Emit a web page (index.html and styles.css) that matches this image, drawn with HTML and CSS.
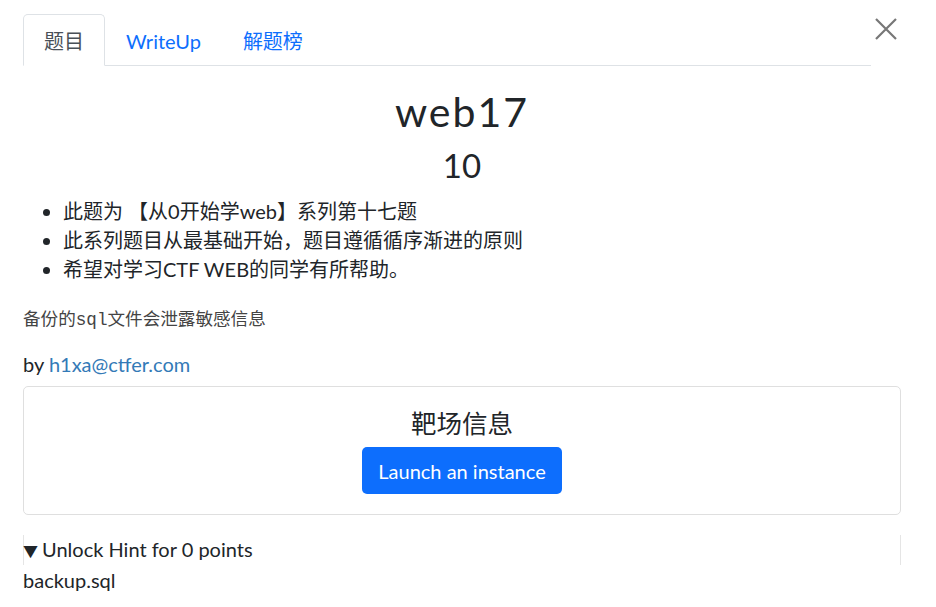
FILE: index.html
```html
<!DOCTYPE html>
<html>
<head>
<meta charset="utf-8">
<link rel="stylesheet" href="styles.css">
</head>
<body>
<div class="modal">
  <div class="top">
    <ul class="tabs">
      <li class="tab active">题目</li>
      <li class="tab">WriteUp</li>
      <li class="tab">解题榜</li>
    </ul>
    <button class="close" aria-label="Close">
      <svg width="22" height="22" viewBox="0 0 22 22"><path d="M1 1L21 21M21 1L1 21" stroke="#777" stroke-width="2.2" fill="none"/></svg>
    </button>
  </div>
  <h2 class="name">web17</h2>
  <h3 class="value">10</h3>
  <ul class="desc">
    <li>此题为 【从0开始学web】系列第十七题</li>
    <li>此系列题目从最基础开始，题目遵循循序渐进的原则</li>
    <li>希望对学习CTF WEB的同学有所帮助。</li>
  </ul>
  <p class="hint-text">备份的sql文件会泄露敏感信息</p>
  <p class="by">by <a href="#">h1xa@ctfer.com</a></p>
  <div class="card">
    <h4 class="card-title">靶场信息</h4>
    <button class="btn">Launch an instance</button>
  </div>
  <div class="details">
    <div class="summary"><span class="marker">▼</span>Unlock Hint for 0 points</div>
  </div>
  <p class="file">backup.sql</p>
</div>
</body>
</html>
```
FILE: styles.css
```css
* { box-sizing: border-box; }
body {
  margin: 0;
  background: #fff;
  font-family: Lato, "Noto Sans CJK SC", sans-serif;
  color: #212529;
  font-size: 20px;
  line-height: 29px;
}
.modal {
  padding: 14px 35px 0 23px;
}
.top {
  display: flex;
  align-items: flex-start;
}
.tabs {
  list-style: none;
  margin: 0;
  padding: 0;
  display: flex;
  flex: 1;
  border-bottom: 1px solid #dee2e6;
  height: 52px;
}
.tab {
  padding: 12px 20px 10px;
  color: #0d6efd;
  border: 1px solid transparent;
  border-radius: 5px 5px 0 0;
  height: 52px;
}
.tab.active {
  color: #495057;
  border-color: #dee2e6 #dee2e6 #fff;
}
.close {
  width: 30px;
  height: 30px;
  border: 0;
  background: none;
  padding: 0;
  margin: 0;
  display: flex;
  align-items: center;
  justify-content: center;
}
.name {
  text-align: center;
  font-weight: 400;
  font-size: 41px;
  letter-spacing: 2px;
  line-height: 48px;
  margin: 22px 0 0;
}
.value {
  text-align: center;
  font-weight: 400;
  font-size: 33px;
  line-height: 40px;
  margin: 9px 0 0;
}
.desc {
  margin: 12px 0 0;
  padding-left: 40px;
}
.hint-text {
  font-family: "Liberation Mono", "Noto Sans CJK SC", monospace;
  font-size: 17.6px;
  color: #444;
  margin: 22px 0 0;
}
.by {
  margin: 15px 0 0;
}
.by a {
  color: #337ab7;
  text-decoration: none;
}
.card {
  margin-top: 7px;
  border: 1px solid #dfdfdf;
  border-radius: 5px;
  height: 129px;
  display: flex;
  flex-direction: column;
  align-items: center;
  padding-top: 19px;
}
.card-title {
  margin: 0;
  font-size: 25.5px;
  font-weight: 400;
  line-height: 34px;
}
.btn {
  margin-top: 7px;
  background: #0d6efd;
  color: #fff;
  border: 0;
  border-radius: 5px;
  font-family: Lato, sans-serif;
  font-size: 20px;
  padding: 0 16px;
  height: 47px;
}
.details {
  margin-top: 20px;
  border-left: 1px solid #e5e5e5;
  border-right: 1px solid #e5e5e5;
  height: 30px;
}
.summary {
  margin-top: 1px;
  color: #212529;
}
.marker {
  display: inline-block;
  font-size: 15px;
  width: 19px;
  margin-left: -1px;
}
.file {
  margin: 1px 0 0;
}
```
